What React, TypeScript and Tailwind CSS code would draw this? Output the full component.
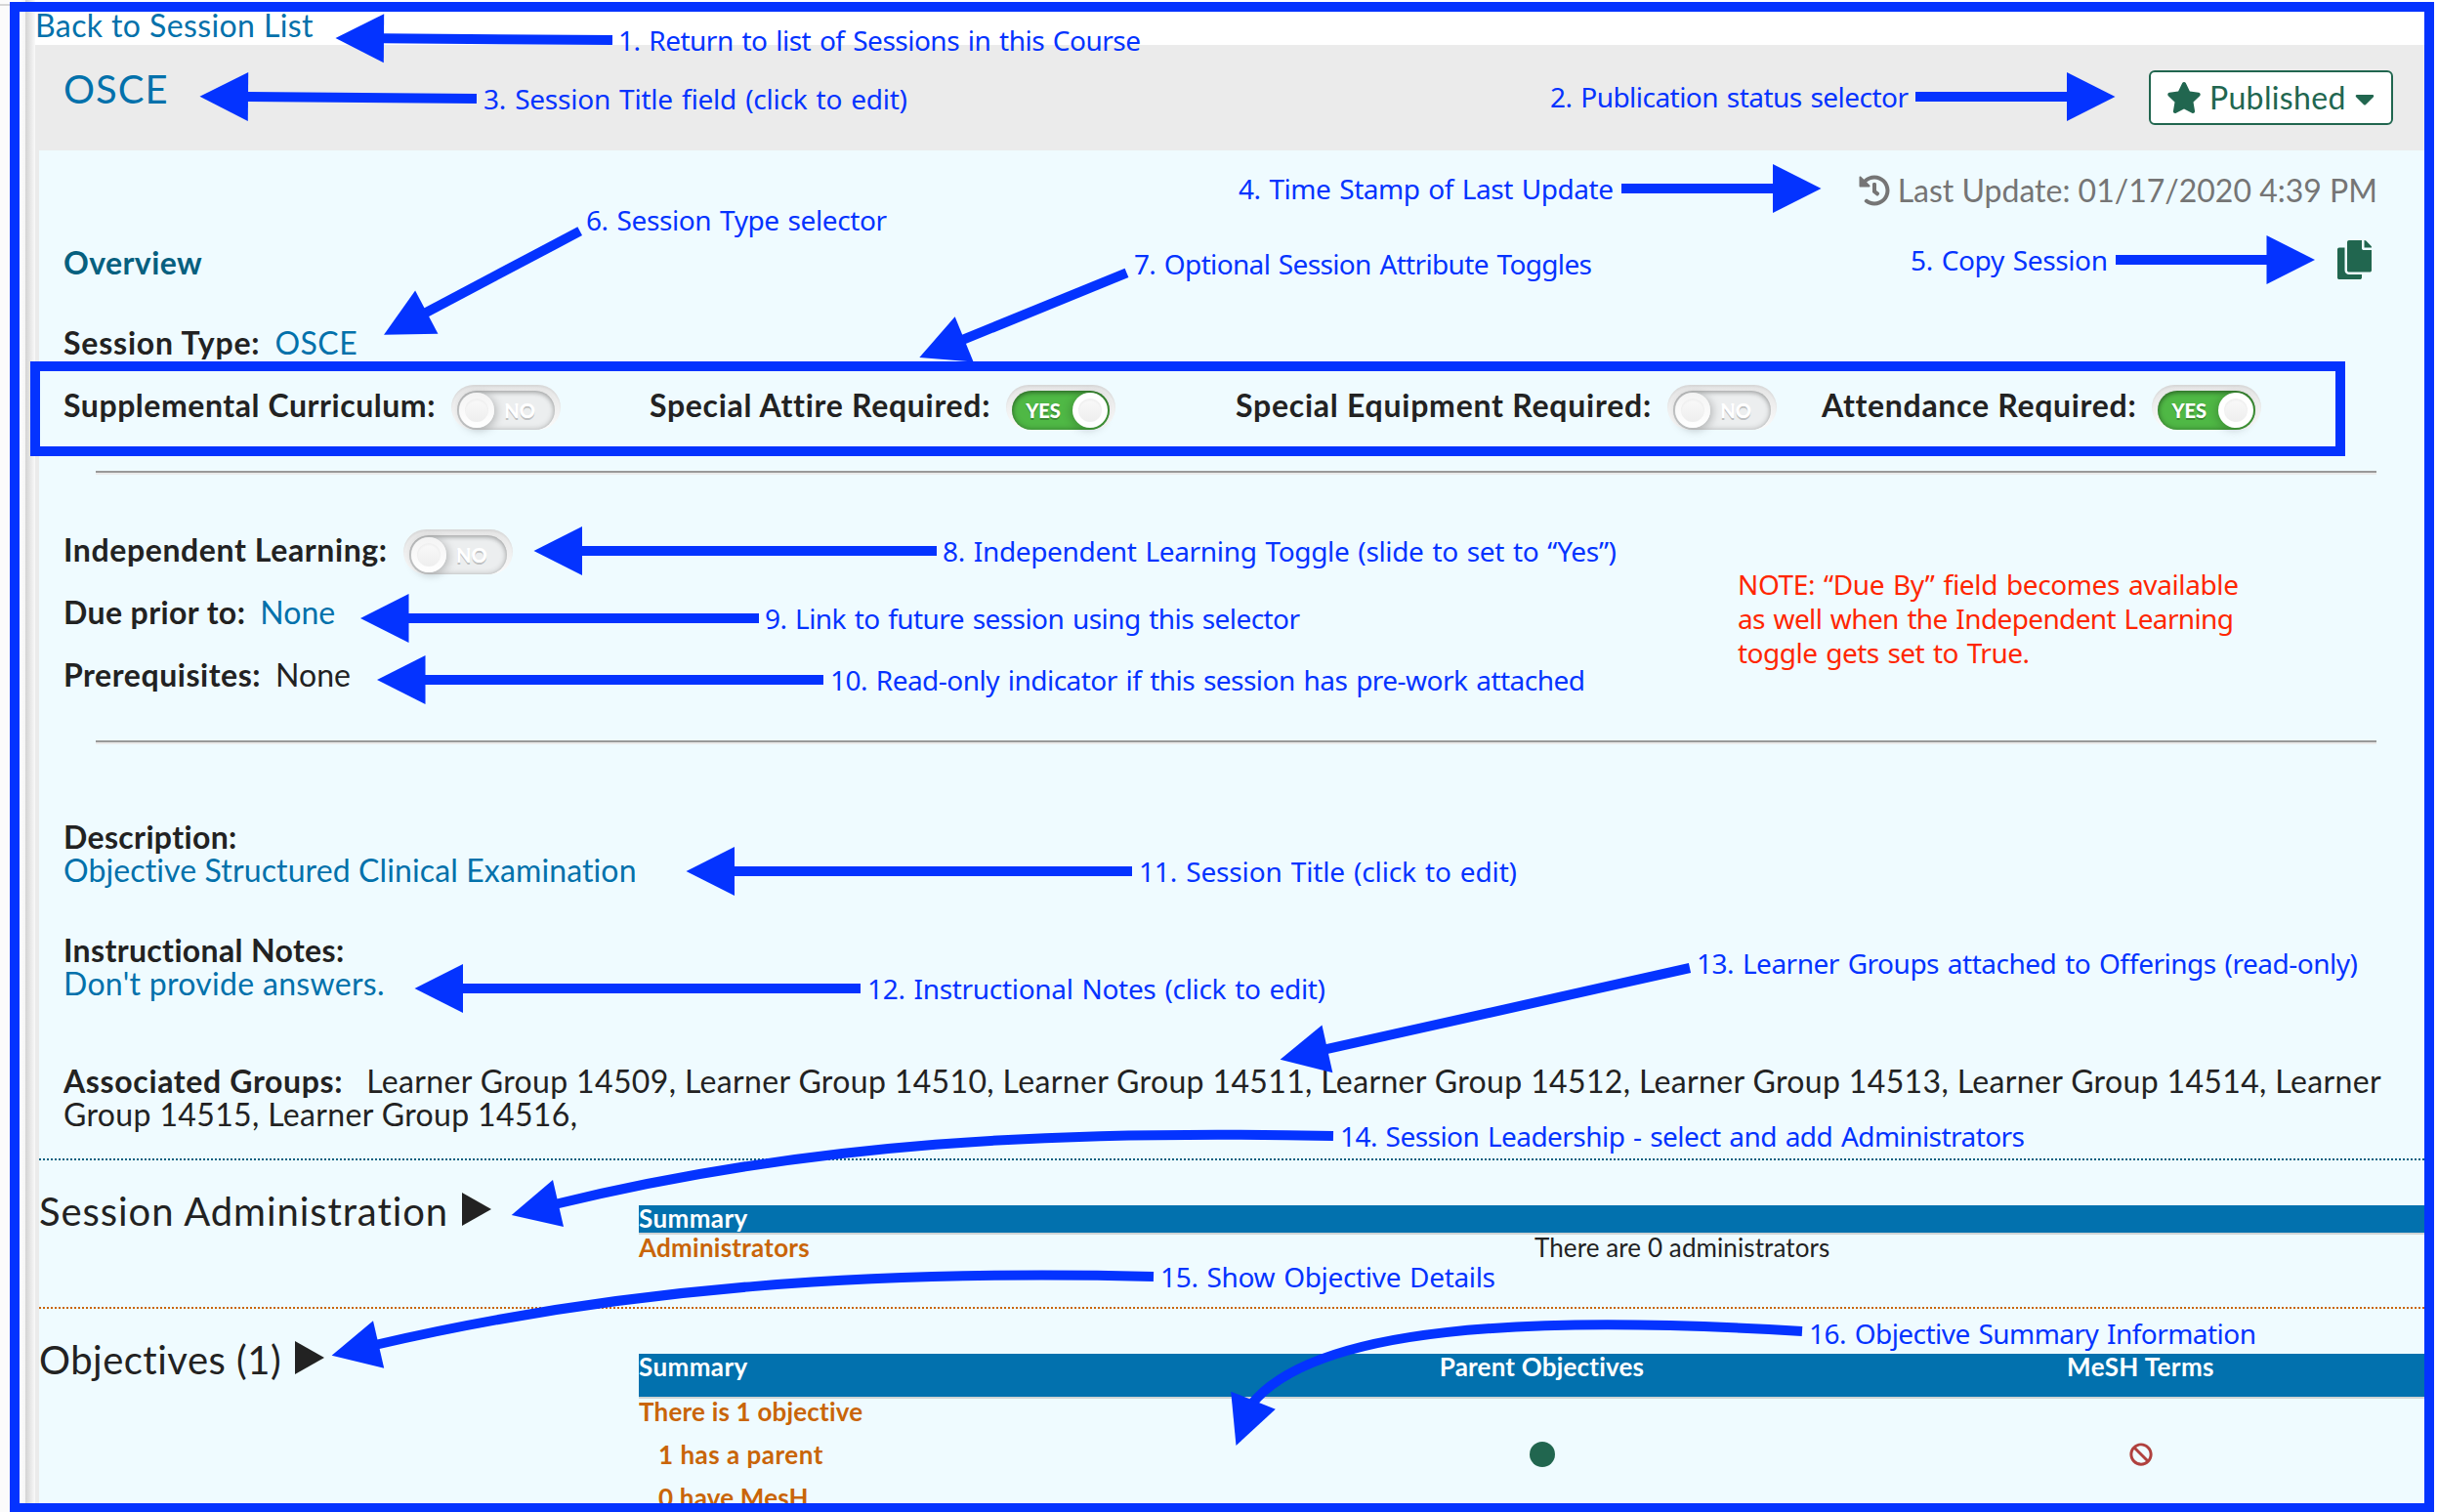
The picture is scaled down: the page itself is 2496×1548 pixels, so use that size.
import React from "react";
import { FaBan, FaCaretDown, FaCopy, FaHistory, FaStar } from "react-icons/fa";

const INK = "#0433ff";

type Note = { x: number; y: number; w: number; text: string; red?: boolean };

const NOTES: Note[] = [
  { x: 633, y: 52, w: 535, text: "1. Return to list of Sessions in this Course" },
  { x: 1587, y: 110, w: 367, text: "2. Publication status selector" },
  { x: 495, y: 112, w: 434, text: "3. Session Title field (click to edit)" },
  { x: 1268, y: 204, w: 384, text: "4. Time Stamp of Last Update" },
  { x: 1956, y: 277, w: 202, text: "5. Copy Session" },
  { x: 600, y: 236, w: 308, text: "6. Session Type selector" },
  { x: 1161, y: 281, w: 469, text: "7. Optional Session Attribute Toggles" },
  { x: 965, y: 575, w: 690, text: "8. Independent Learning Toggle (slide to set to “Yes”)" },
  { x: 783, y: 644, w: 548, text: "9. Link to future session using this selector" },
  { x: 850, y: 707, w: 773, text: "10. Read-only indicator if this session has pre-work attached" },
  { x: 1166, y: 903, w: 387, text: "11. Session Title (click to edit)" },
  { x: 888, y: 1023, w: 469, text: "12. Instructional Notes (click to edit)" },
  { x: 1737, y: 997, w: 677, text: "13. Learner Groups attached to Offerings (read-only)" },
  { x: 1372, y: 1174, w: 701, text: "14. Session Leadership - select and add Administrators" },
  { x: 1188, y: 1318, w: 343, text: "15. Show Objective Details" },
  { x: 1852, y: 1376, w: 458, text: "16. Objective Summary Information" },
  { x: 1779, y: 609, w: 513, text: "NOTE: “Due By” field becomes available", red: true },
  { x: 1779, y: 644, w: 508, text: "as well when the Independent Learning", red: true },
  { x: 1779, y: 679, w: 299, text: "toggle gets set to True.", red: true },
];

/* tail x, tail y, tip x, tip y */
const ARROWS: [number, number, number, number][] = [
  [627, 41, 343.5, 39],
  [488, 101, 204.5, 98.7],
  [1961, 99, 2165.5, 99],
  [1660, 193, 1864.5, 193],
  [2166, 266, 2370, 266],
  [593.7, 236.7, 393, 342.7],
  [1153.5, 279.3, 941.3, 366],
  [959, 564, 546.5, 564],
  [777, 633, 369, 633],
  [843, 696, 386, 696],
  [1159, 892, 702.5, 892],
  [881, 1012, 424.5, 1012],
  [1730, 991, 1310.6, 1084.7],
];

const CURVES = [
  { d: "M1365 1163C1080 1157 830 1169 568 1233", head: "523.7,1244 566,1208 577,1256" },
  { d: "M1181 1307C900 1300 640 1317 384 1377", head: "339.6,1387.7 382,1352.3 393.2,1400.7" },
  { d: "M1845 1363C1560 1346 1345 1358 1281 1438", head: "1265.5,1480 1260.2,1424.7 1305.8,1442.7" },
];

function Arrow({ a: [x1, y1, x2, y2] }: { a: [number, number, number, number] }) {
  const len = Math.hypot(x2 - x1, y2 - y1);
  const ux = (x2 - x1) / len;
  const uy = (y2 - y1) / len;
  const bx = x2 - ux * 49.5;
  const by = y2 - uy * 49.5;
  return (
    <>
      <path d={`M${x1} ${y1}L${bx + ux} ${by + uy}`} stroke={INK} strokeWidth="10" />
      <polygon
        fill={INK}
        points={`${x2},${y2} ${bx - uy * 25},${by + ux * 25} ${bx + uy * 25},${by - ux * 25}`}
      />
    </>
  );
}

function Annotations() {
  return (
    <svg
      className="pointer-events-none absolute left-0 top-0 h-[1548px] w-[2496px]"
      viewBox="0 0 2496 1548"
      fill="none"
    >
      {ARROWS.map((a, i) => (
        <Arrow key={i} a={a} />
      ))}
      {CURVES.map((c) => (
        <g key={c.d}>
          <path d={c.d} stroke={INK} strokeWidth="10" />
          <polygon points={c.head} fill={INK} />
        </g>
      ))}
      {NOTES.map((n) => (
        <text
          key={n.text}
          x={n.x}
          y={n.y}
          textLength={n.w}
          fill={n.red ? "#ff2600" : INK}
          className="font-['Noto_Sans',sans-serif] text-[28px] [word-spacing:2px]"
        >
          {n.text}
        </text>
      ))}
    </svg>
  );
}

function Toggle({ on = false }: { on?: boolean }) {
  return (
    <span className="relative h-[46px] w-[112px] shrink-0 rounded-[23px] bg-linear-to-b from-[#e4e4e4] to-[#fbfbfb] px-1.5 pt-1.5 shadow-[inset_0_2px_2px_rgba(0,0,0,0.06)]">
      <span
        className={
          on
            ? "relative flex h-10 w-[100px] items-center rounded-full bg-[#4fb845] pl-3.5 shadow-[inset_0_2px_4px_rgba(0,0,0,0.3),inset_0_0_6px_rgba(0,0,0,0.3)]"
            : "relative flex h-10 w-[100px] items-center justify-end rounded-full bg-[#eceeef] pr-5 shadow-[inset_0_2px_4px_rgba(0,0,0,0.2),inset_0_0_6px_rgba(0,0,0,0.22)]"
        }
      >
        <span
          className={
            on
              ? "text-[20px] font-black leading-none text-white [text-shadow:0_2px_rgba(0,0,0,0.25)]"
              : "text-[20px] font-black leading-none text-white [text-shadow:0_2px_rgba(0,0,0,0.2)]"
          }
        >
          {on ? "YES" : "NO"}
        </span>
        <span
          className={
            on
              ? "absolute right-0.5 top-0.5 flex size-9 items-center justify-center rounded-full bg-white shadow-[-2px_2px_10px_rgba(0,0,0,0.2)]"
              : "absolute left-0.5 top-0.5 flex size-9 items-center justify-center rounded-full bg-linear-to-b from-[#f4f4f4] to-white shadow-[2px_2px_10px_rgba(0,0,0,0.25)]"
          }
        >
          <span className="size-6 rounded-full bg-linear-to-b from-[#fafafa] to-[#eeeeee] shadow-[inset_0_2px_2px_rgba(0,0,0,0.04)]" />
        </span>
      </span>
    </span>
  );
}

function Label({
  children,
  tracking = "tracking-[0.55px]",
}: {
  children: React.ReactNode;
  tracking?: string;
}) {
  return <span className={`whitespace-nowrap font-bold text-[#222] ${tracking}`}>{children}</span>;
}

function Attribute({ label, on, tracking }: { label: string; on?: boolean; tracking?: string }) {
  return (
    <div className="flex w-[600px] shrink-0 gap-4">
      <span className="pt-1">
        <Label tracking={tracking}>{label}</Label>
      </span>
      <Toggle on={on} />
    </div>
  );
}

function Rule({ className }: { className: string }) {
  return (
    <div
      className={`ml-[33px] mr-[49px] h-1 border-y-2 border-b-[#eaeaea] border-t-[#999] ${className}`}
    />
  );
}

function SectionTitle({ children, tracking }: { children: React.ReactNode; tracking: string }) {
  return (
    <h2
      className={`flex w-[614px] shrink-0 items-start pt-7 text-[40px] leading-[48px] text-[#222] ${tracking}`}
    >
      {children}
      <svg viewBox="0 0 30 34" className="ml-[14px] mt-[5px] h-[34px] w-[30px]">
        <path d="M0 0L30 17L0 34Z" fill="#222" />
      </svg>
    </h2>
  );
}

const GROUPS = [14509, 14510, 14511, 14512, 14513, 14514, 14515, 14516];

export default function App() {
  return (
    <div className="relative flex h-[1548px] w-[2496px] overflow-hidden bg-white font-['Lato',sans-serif] text-[32px] leading-[34px]">
      <div className="w-[10px] bg-[#fbfbfb] pt-1">
        <div className="h-0.5 bg-[#d6d6d6]" />
      </div>
      <div className="ml-[10px] w-1.5 bg-linear-to-r from-white to-[#f4f4f4]" />
      <div className="w-2.5 bg-linear-to-r from-[#d3d3d3] to-[#fafafa]" />

      <main className="flex w-[2446px] flex-col overflow-hidden">
        <div className="h-[46px] shrink-0 pt-[9px]">
          <a className="tracking-[0.4px] text-[#0271ab]">Back to Session List</a>
        </div>

        <header className="flex h-[108px] shrink-0 items-start justify-between bg-[#ebebeb] pl-[29px] pr-8">
          <h1 className="pt-[21px] text-[40px] leading-[48px] tracking-[1px] text-[#0271ab]">OSCE</h1>
          <button className="mt-[26px] flex h-14 w-[250px] items-center rounded-[6px] border-2 border-[#21664f] bg-white pl-4 text-[#21664f]">
            <FaStar className="h-8 w-9 shrink-0" />
            <span className="ml-[8px] tracking-[0.35px]">Published</span>
            <FaCaretDown className="ml-[9px] mt-px size-8 w-5 shrink-0" />
          </button>
        </header>

        <div className="flex grow flex-col border-l-4 border-[#ebebeb] bg-[#effbff] text-[#222]">
          <div className="flex h-[1032px] shrink-0 flex-col pl-[25px]">
            <div className="mr-[48px] mt-[24px] flex h-[34px] items-center justify-end gap-2 text-[#757575]">
              <FaHistory className="size-8" />
              <span>Last Update: 01/17/2020 4:39 PM</span>
            </div>

            <div className="mr-[54px] mt-[34px] flex h-10 items-start justify-between">
              <h2 className="pt-1.5 font-bold tracking-[0.4px] text-[#06607f]">Overview</h2>
              <FaCopy className="h-10 w-[35px] text-[#21664f]" />
            </div>

            <div className="mt-12 flex gap-[15px]">
              <Label tracking="tracking-[0.8px]">Session Type:</Label>
              <a className="tracking-[0.5px] text-[#0271ab]">OSCE</a>
            </div>

            <div className="mt-[26px] flex h-[46px]">
              <Attribute label="Supplemental Curriculum:" tracking="tracking-[0.55px]" />
              <Attribute label="Special Attire Required:" tracking="tracking-[0.7px]" on />
              <Attribute label="Special Equipment Required:" tracking="tracking-[0.75px]" />
              <Attribute label="Attendance Required:" tracking="tracking-[0.7px]" on />
            </div>

            <Rule className="mt-[42px]" />

            <div className="mt-14 flex h-[46px]">
              <Attribute label="Independent Learning:" tracking="tracking-[0.6px]" />
            </div>
            <div className="mt-[22px] flex gap-[15px]">
              <Label tracking="tracking-[0.4px]">Due prior to:</Label>
              <a className="text-[#0271ab]">None</a>
            </div>
            <div className="mt-[30px] flex gap-[15px]">
              <Label>Prerequisites:</Label>
              <span>None</span>
            </div>

            <Rule className="mt-[50px]" />

            <div className="mt-[78px] flex flex-col">
              <Label tracking="tracking-[0.35px]">Description:</Label>
              <a className="tracking-[0.12px] text-[#0271ab]">Objective Structured Clinical Examination</a>
            </div>
            <div className="mt-12 flex flex-col">
              <Label tracking="tracking-[0.35px]">Instructional Notes:</Label>
              <a className="tracking-[0.3px] text-[#0271ab]">Don't provide answers.</a>
            </div>
            <p className="mr-10 mt-[66px] tracking-[0.36px]">
              <span className="mr-6">
                <Label tracking="tracking-[0.65px]">Associated Groups:</Label>
              </span>
              {GROUPS.map((g) => `Learner Group ${g}, `)}
            </p>
          </div>

          <section className="flex h-[152px] shrink-0 border-t-2 border-dotted border-[#006080]">
            <SectionTitle tracking="tracking-[0.92px]">Session Administration</SectionTitle>
            <div className="mt-[46px] flex grow flex-col text-[26px] leading-[26px]">
              <div className="h-[30px] border-b-2 border-[#cfd3d4] bg-[#0271ae] font-bold tracking-[0.4px] text-white">
                Summary
              </div>
              <div className="flex">
                <span className="w-[917px] font-bold tracking-[0.25px] text-[#c96508]">Administrators</span>
                <span className="tracking-[0.1px]">There are 0 administrators</span>
              </div>
            </div>
          </section>

          <section className="flex h-[210px] shrink-0 border-t-2 border-dotted border-[#c96508]">
            <SectionTitle tracking="tracking-[0.5px]">Objectives (1)</SectionTitle>
            <div className="mt-[46px] w-[1828px] overflow-hidden text-[26px] font-bold leading-[26px] tracking-[0.2px] text-[#c96508]">
              <div className="flex h-[46px] w-[1845px] border-b-2 border-[#cfd3d4] bg-[#0271ae] text-white">
                <span className="w-[618px] tracking-[0.4px]">Summary</span>
                <span className="w-[613px] text-center">Parent Objectives</span>
                <span className="w-[613px] text-center tracking-[0.4px]">MeSH Terms</span>
              </div>
              <div className="h-11">There is 1 objective</div>
              <div className="flex h-11 w-[1845px]">
                <span className="w-[618px] pl-5 tracking-[0.5px]">1 has a parent</span>
                <span className="flex w-[613px] justify-center">
                  <span className="size-[26px] rounded-full bg-[#21664f]" />
                </span>
                <span className="flex w-[613px] justify-center">
                  <FaBan className="mt-px size-6 text-[#b0413e]" />
                </span>
              </div>
              <div className="pl-5">0 have MesH</div>
            </div>
          </section>
        </div>
      </main>

      <div className="absolute left-[31px] top-[370px] h-[97px] w-[2370px] border-[10px] border-[#0433ff]" />
      <div className="absolute left-[10px] top-[2px] h-[1547px] w-[2482px] border-[10px] border-[#0433ff]" />
      <Annotations />
    </div>
  );
}
